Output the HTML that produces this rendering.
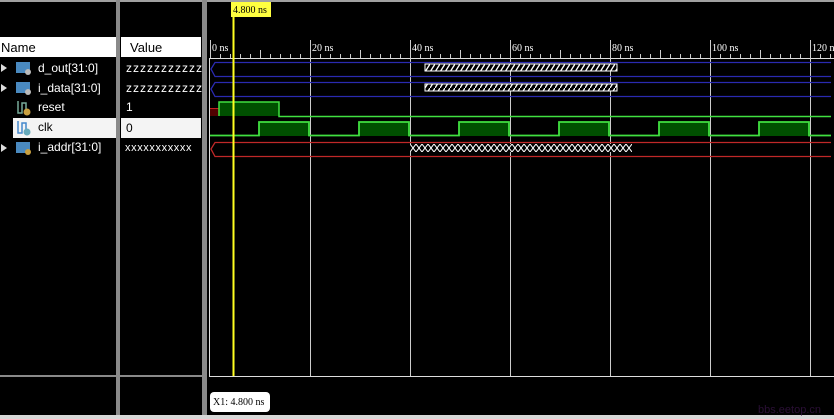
<!DOCTYPE html>
<html><head><meta charset="utf-8"><style>
body{margin:0;background:#000;width:834px;height:419px;overflow:hidden;font-family:"Liberation Sans",sans-serif}
svg{display:block}
</style></head><body>
<svg width="834" height="419" xmlns="http://www.w3.org/2000/svg">
<defs>
<pattern id="hatch" width="5" height="8" patternUnits="userSpaceOnUse">
<rect width="5" height="8" fill="#000"/>
<path d="M0 8 L5 0" stroke="#fff" stroke-width="1.3"/>
</pattern>
<pattern id="xx" width="6" height="8" patternUnits="userSpaceOnUse" x="410">
<rect width="6" height="8" fill="#000"/>
<path d="M0 0 L6 8 M0 8 L6 0" stroke="#fff" stroke-width="1"/>
</pattern>
</defs>
<rect width="834" height="419" fill="#000"/>
<rect x="0" y="0" width="834" height="2" fill="#a0a0a0"/>
<rect x="116" y="0" width="4" height="416" fill="#8a8a8a"/>
<rect x="202" y="0" width="5" height="416" fill="#8a8a8a"/>
<rect x="0" y="375" width="206" height="2" fill="#8a8a8a"/>
<rect x="0" y="415" width="834" height="4" fill="#d8d8d8"/>
<rect x="0" y="37" width="116" height="20" fill="#fff"/>
<rect x="121" y="37" width="80" height="20" fill="#fff"/>
<text x="1" y="52" font-size="13" fill="#000">Name</text>
<text x="130" y="52" font-size="13" fill="#000">Value</text>
<rect x="13" y="118" width="103" height="20" fill="#f4f4f4"/>
<rect x="121" y="118" width="80" height="20" fill="#f4f4f4"/>
<g font-size="12" fill="#fff">
<path d="M1 64 L7 68 L1 72Z" fill="#ddd"/>
<path d="M1 84 L7 88 L1 92Z" fill="#ddd"/>
<path d="M1 144 L7 148 L1 152Z" fill="#ddd"/>
<rect x="16" y="62" width="14" height="11" fill="#4a8ac0"/><circle cx="28" cy="72" r="3" fill="#bbb"/>
<rect x="16" y="82" width="14" height="11" fill="#4a8ac0"/><circle cx="28" cy="92" r="3" fill="#bbb"/>
<rect x="16" y="142" width="14" height="11" fill="#4a8ac0"/><circle cx="28" cy="152" r="3" fill="#c9a040"/>
<path d="M18 101 V113 H22 V103 H26 V111" stroke="#7a9" stroke-width="1.5" fill="none"/><circle cx="27" cy="112" r="3.5" fill="#c9a040"/>
<path d="M18 121 V133 H22 V123 H26 V131" stroke="#48c" stroke-width="1.5" fill="none"/><circle cx="27" cy="132" r="3.5" fill="#6ab"/>
<text x="38" y="72">d_out[31:0]</text>
<text x="38" y="92">i_data[31:0]</text>
<text x="38" y="111">reset</text>
<text x="38" y="131" fill="#000">clk</text>
<text x="38" y="151">i_addr[31:0]</text>
<text x="126" y="72" letter-spacing="1">zzzzzzzzzzz</text>
<text x="126" y="92" letter-spacing="1">zzzzzzzzzzz</text>
<text x="126" y="111">1</text>
<text x="126" y="132" fill="#000">0</text>
<text x="125" y="151" font-size="11" letter-spacing="0.6">xxxxxxxxxxx</text>
</g>
<line x1="209.5" y1="58" x2="209.5" y2="376" stroke="#ddd"/>
<line x1="209" y1="376.5" x2="834" y2="376.5" stroke="#ddd"/>
<line x1="209" y1="58.5" x2="834" y2="58.5" stroke="#ddd"/>
<g stroke="#ccc">
<line x1="310.5" y1="40" x2="310.5" y2="376"/>
<line x1="410.5" y1="40" x2="410.5" y2="376"/>
<line x1="510.5" y1="40" x2="510.5" y2="376"/>
<line x1="610.5" y1="40" x2="610.5" y2="376"/>
<line x1="710.5" y1="40" x2="710.5" y2="376"/>
<line x1="810.5" y1="40" x2="810.5" y2="376"/>
<line x1="210.5" y1="40" x2="210.5" y2="58"/>
</g>
<g stroke="#ccc">
<path d="M220.5 54V58M230.5 54V58M240.5 54V58M250.5 54V58M260.5 50V58M270.5 54V58M280.5 54V58M290.5 54V58M300.5 54V58
M320.5 54V58M330.5 54V58M340.5 54V58M350.5 54V58M360.5 50V58M370.5 54V58M380.5 54V58M390.5 54V58M400.5 54V58
M420.5 54V58M430.5 54V58M440.5 54V58M450.5 54V58M460.5 50V58M470.5 54V58M480.5 54V58M490.5 54V58M500.5 54V58
M520.5 54V58M530.5 54V58M540.5 54V58M550.5 54V58M560.5 50V58M570.5 54V58M580.5 54V58M590.5 54V58M600.5 54V58
M620.5 54V58M630.5 54V58M640.5 54V58M650.5 54V58M660.5 50V58M670.5 54V58M680.5 54V58M690.5 54V58M700.5 54V58
M720.5 54V58M730.5 54V58M740.5 54V58M750.5 54V58M760.5 50V58M770.5 54V58M780.5 54V58M790.5 54V58M800.5 54V58
M820.5 54V58M830.5 54V58"/>
</g>
<g font-family="Liberation Serif,serif" font-size="10" fill="#fff">
<text x="212" y="51">0 ns</text>
<text x="312" y="51">20 ns</text>
<text x="412" y="51">40 ns</text>
<text x="512" y="51">60 ns</text>
<text x="612" y="51">80 ns</text>
<text x="712" y="51">100 ns</text>
<text x="812" y="51">120 ns</text>
</g>
<g fill="none" stroke-width="1.3">
<path d="M831 62.5 H215 L211 69 L215 76.5 H831" stroke="#2a2ab0"/>
<path d="M831 82.5 H215 L211 89 L215 96.5 H831" stroke="#2a2ab0"/>
<path d="M831 142.5 H215 L211 149 L215 156.5 H831" stroke="#c02828"/>
</g>
<rect x="425" y="64" width="192" height="7" fill="url(#hatch)" stroke="#fff" stroke-width="1"/>
<rect x="425" y="84" width="192" height="7" fill="url(#hatch)" stroke="#fff" stroke-width="1"/>
<rect x="410" y="144" width="222" height="8" fill="url(#xx)"/>
<rect x="210" y="109" width="9" height="7" fill="#500000"/>
<path d="M210 108.5 H219" stroke="#c02020"/>
<rect x="219" y="102" width="60" height="14" fill="#005000"/>
<path d="M219 116 V102 H279 V116.5 H831" stroke="#40e040" stroke-width="1.5" fill="none"/>
<g fill="#005000">
<rect x="259" y="122" width="50" height="14"/><rect x="359" y="122" width="50" height="14"/>
<rect x="459" y="122" width="50" height="14"/><rect x="559" y="122" width="50" height="14"/>
<rect x="659" y="122" width="50" height="14"/><rect x="759" y="122" width="50" height="14"/>
</g>
<path d="M210 135.5 H259 V122 H309 V135.5 H359 V122 H409 V135.5 H459 V122 H509 V135.5 H559 V122 H609 V135.5 H659 V122 H709 V135.5 H759 V122 H809 V135.5 H831" stroke="#40e040" stroke-width="1.8" fill="none"/>
<line x1="233.5" y1="17" x2="233.5" y2="376" stroke="#ffff20" stroke-width="2"/>
<rect x="231" y="2" width="40" height="15" fill="#ffff40"/>
<text x="233" y="13" font-family="Liberation Serif,serif" font-size="10" fill="#000">4.800 ns</text>
<rect x="210" y="392" width="60" height="20" rx="4" fill="#fff"/>
<text x="213" y="405" font-family="Liberation Serif,serif" font-size="10" fill="#000">X1: 4.800 ns</text>
<text x="758" y="413" font-size="11" fill="#2a0f35">bbs.eetop.cn</text>
</svg>
</body></html>
